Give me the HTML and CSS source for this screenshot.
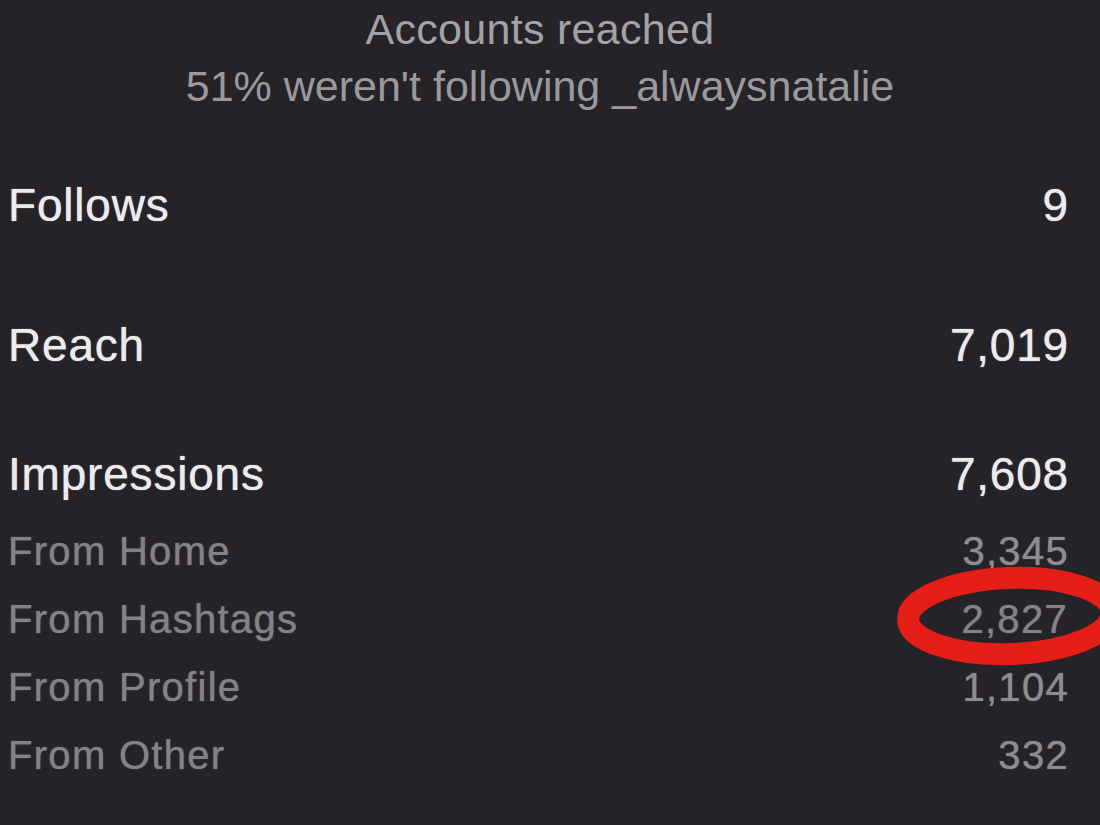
FILE: index.html
```
<!DOCTYPE html>
<html>
<head>
<meta charset="utf-8">
<link rel="stylesheet" href="styles.css">
</head>
<body>
<div class="page">
  <header class="summary">
    <div class="summary-title">Accounts reached</div>
    <div class="summary-sub">51% weren't following _alwaysnatalie</div>
  </header>
  <div class="row main follows"><span>Follows</span><span>9</span></div>
  <div class="row main reach"><span>Reach</span><span>7,019</span></div>
  <div class="row main impressions"><span>Impressions</span><span>7,608</span></div>
  <div class="row sub first"><span>From Home</span><span>3,345</span></div>
  <div class="row sub marked"><span>From Hashtags</span><span>2,827</span>
    <svg class="circle" width="260" height="115" viewBox="0 0 260 115"><ellipse cx="125" cy="56" rx="102" ry="38" fill="none" stroke="#e41d17" stroke-width="22" transform="rotate(-2 125 56)"/></svg>
  </div>
  <div class="row sub"><span>From Profile</span><span>1,104</span></div>
  <div class="row sub"><span>From Other</span><span>332</span></div>
</div>
</body>
</html>
```
FILE: styles.css
```
html, body {
  margin: 0;
  padding: 0;
  background: #252327;
  overflow: hidden;
}
.page {
  width: 1100px;
  height: 825px;
  box-sizing: border-box;
  padding: 1px 32px 0 8px;
  font-family: "Liberation Sans", Arial, sans-serif;
  display: flex;
  flex-direction: column;
}
.summary {
  text-align: center;
  font-size: 43px;
  line-height: 57px;
  color: #a3a2a6;
  padding-left: 4px;
  letter-spacing: 0.3px;
}
.summary-sub {
  color: #9a999d;
  letter-spacing: 0;
}
.row {
  display: flex;
  justify-content: space-between;
  position: relative;
  text-shadow: 0 0 1px currentColor;
}
.main {
  font-size: 46px;
  line-height: 60px;
  color: #ebebed;
  letter-spacing: 0.8px;
}
.follows { margin-top: 60px; }
.reach { margin-top: 80px; }
.impressions { margin-top: 69px; }
.sub {
  font-size: 40px;
  line-height: 68px;
  color: #838286;
  letter-spacing: 1.3px;
}
.row span:last-child {
  margin-right: -1px;
}
.sub span:last-child {
  color: #8d8c90;
}
.first { margin-top: 13px; }
.circle {
  position: absolute;
  left: 877px;
  top: -25px;
}
```
